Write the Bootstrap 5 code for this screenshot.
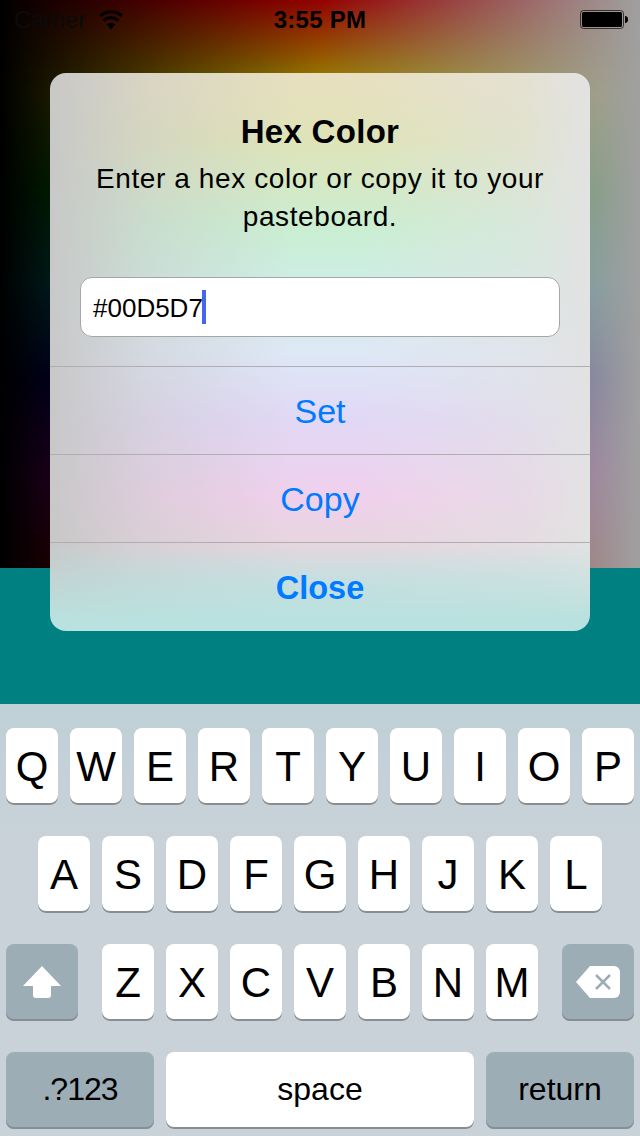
<!DOCTYPE html>
<html lang="en">
<head>
  <meta charset="UTF-8">
  <title>Hex Color</title>
  <meta name="viewport" content="width=device-width, initial-scale=1.0">
  <link rel="stylesheet" href="https://cdn.jsdelivr.net/npm/bootstrap@5.3.0/dist/css/bootstrap.min.css">
  <style>
    body { font-family: "Liberation Sans", Arial, sans-serif; width: 640px; height: 1136px; overflow: hidden; color: #000; background: #c9d2d8; }
    .stage { height: 704px; background: #008080; }
    .picker { height: 568px; background: linear-gradient(to right, #000 0, rgba(0,0,0,.9) 8%, rgba(0,0,0,.42) 50%, #a0a0a0 100%), linear-gradient(to bottom, #f00 0, #ff0 16.67%, #0f0 33.33%, #0ff 50%, #00f 66.67%, #f0f 83.33%, #f00 100%); }
    .status-bar { height: 40px; padding: 0 11px 0 14px; font-size: 24px; }
    .status-side { width: 200px; }
    .status-time { font-weight: 700; letter-spacing: .25px; margin-left: -3px; }
    .carrier { color: #0b0b0b; margin-right: 13px; letter-spacing: -.2px; }
    .alert-box { position: absolute; left: 50px; top: 73px; width: 540px; height: 558px; border-radius: 16px; overflow: hidden; text-align: center;
      background: linear-gradient(to bottom, rgba(185,225,223,0) 84%, #b9e1df 98%),
        linear-gradient(to right, #c8c8c8 0, rgba(200,200,200,.45) 18%, rgba(222,222,222,0) 45%, rgba(226,226,226,0) 58%, rgba(226,226,226,.55) 88%, #e2e2e2 100%),
        linear-gradient(to bottom, #e8dfc0 0, #dfe3b8 12%, #caeed2 28%, #cdeee2 36%, #dee8f6 50%, #e1d8f6 62%, #f0d0ec 76%, #e6d6de 85%, #cfdde0 92%); }
    .alert-title { font-size: 33px; font-weight: 700; line-height: 38px; padding-top: 40px; letter-spacing: .3px; }
    .alert-msg { font-size: 28px; line-height: 38px; padding: 9px 30px 0; margin: 0; letter-spacing: .6px; }
    .hex-field { width: 480px; height: 60px; margin: 41px 30px 29px; padding: 2px 12px 0; border: 1px solid #a6a6a6; border-radius: 12px; background: #fff; font-size: 26px; }
    .caret-bar { width: 4px; height: 34px; margin-top: -2px; margin-left: -1px; background: #4766f0; }
    .alert-btn { height: 88px; padding-top: 2px; font-size: 34px; color: #007aff; border-top: 1px solid #b0aeb2; }
    .alert-btn-bold { font-size: 32.5px; font-weight: 700; padding-top: 4px; }
    .kb { height: 432px; padding-top: 24px; background: linear-gradient(to bottom, #bfd0d7 0, #c9d2d8 35%, #c9d2d8 100%); }
    .kb-row { height: 77px; margin-bottom: 31px; gap: 12px; }
    .kb-key { width: 52px; height: 77px; flex: none; background: #fff; border-radius: 8px; box-shadow: inset 0 -2px 0 #878e93; font-size: 42px; }
    .kb-dark { background: #9dadb6; }
    .kb-wide { width: 72px; padding-bottom: 2px; }
    .kb-side { width: 148px; font-size: 32px; padding-bottom: 4px; }
    .kb-num { letter-spacing: -1px; }
    .kb-space { width: 308px; font-size: 32px; padding-bottom: 4px; }
    .kb-gap { width: 0; }
  </style>
</head>
<body class="position-relative">

<div class="stage">
  <div class="picker">
    <div class="status-bar d-flex align-items-center justify-content-between">
      <div class="status-side d-flex align-items-center">
        <span class="carrier">Carrier</span>
        <svg width="24" height="20" viewBox="0 0 24 20"><path d="M12 19.500 7.800 14.500a6 6 0 0 1 8.400 0Z" fill="#000"/><path d="M4.600 10.600a11 11 0 0 1 14.800 0M1.200 5.800a16.500 16.500 0 0 1 21.600 0" fill="none" stroke="#000" stroke-width="3.200"/></svg>
      </div>
      <span class="status-time">3:55 PM</span>
      <div class="status-side d-flex align-items-center justify-content-end">
        <svg width="49" height="20" viewBox="0 0 49 20"><rect x=".5" y=".5" width="43" height="18" rx="3" fill="none" stroke="#000" stroke-opacity=".65"/><rect x="2" y="2" width="40" height="15" rx="1.500" fill="#000"/><path d="M45 6c2 0 3 1.500 3 3.500s-1 3.500-3 3.500Z" fill="#000"/></svg>
      </div>
    </div>
  </div>
</div>

<div class="alert-box d-flex flex-column">
  <div class="alert-title">Hex Color</div>
  <p class="alert-msg">Enter a hex color or copy it to your pasteboard.</p>
  <div class="hex-field d-flex align-items-center">#00D5D7<span class="caret-bar"></span></div>
  <div class="alert-btn d-flex align-items-center justify-content-center">Set</div>
  <div class="alert-btn d-flex align-items-center justify-content-center">Copy</div>
  <div class="alert-btn alert-btn-bold d-flex align-items-center justify-content-center">Close</div>
</div>

<div class="kb">
  <div class="kb-row d-flex justify-content-center">
    <div class="kb-key d-flex align-items-center justify-content-center">Q</div>
    <div class="kb-key d-flex align-items-center justify-content-center">W</div>
    <div class="kb-key d-flex align-items-center justify-content-center">E</div>
    <div class="kb-key d-flex align-items-center justify-content-center">R</div>
    <div class="kb-key d-flex align-items-center justify-content-center">T</div>
    <div class="kb-key d-flex align-items-center justify-content-center">Y</div>
    <div class="kb-key d-flex align-items-center justify-content-center">U</div>
    <div class="kb-key d-flex align-items-center justify-content-center">I</div>
    <div class="kb-key d-flex align-items-center justify-content-center">O</div>
    <div class="kb-key d-flex align-items-center justify-content-center">P</div>
  </div>
  <div class="kb-row d-flex justify-content-center">
    <div class="kb-key d-flex align-items-center justify-content-center">A</div>
    <div class="kb-key d-flex align-items-center justify-content-center">S</div>
    <div class="kb-key d-flex align-items-center justify-content-center">D</div>
    <div class="kb-key d-flex align-items-center justify-content-center">F</div>
    <div class="kb-key d-flex align-items-center justify-content-center">G</div>
    <div class="kb-key d-flex align-items-center justify-content-center">H</div>
    <div class="kb-key d-flex align-items-center justify-content-center">J</div>
    <div class="kb-key d-flex align-items-center justify-content-center">K</div>
    <div class="kb-key d-flex align-items-center justify-content-center">L</div>
  </div>
  <div class="kb-row d-flex justify-content-center">
    <div class="kb-key kb-dark kb-wide d-flex align-items-center justify-content-center">
      <svg width="38" height="32" viewBox="0 0 38 32"><path d="M19 0 38 20H28V29a3 3 0 0 1-3 3H13a3 3 0 0 1-3-3V20H0Z" fill="#fff"/></svg>
    </div>
    <div class="kb-gap"></div>
    <div class="kb-key d-flex align-items-center justify-content-center">Z</div>
    <div class="kb-key d-flex align-items-center justify-content-center">X</div>
    <div class="kb-key d-flex align-items-center justify-content-center">C</div>
    <div class="kb-key d-flex align-items-center justify-content-center">V</div>
    <div class="kb-key d-flex align-items-center justify-content-center">B</div>
    <div class="kb-key d-flex align-items-center justify-content-center">N</div>
    <div class="kb-key d-flex align-items-center justify-content-center">M</div>
    <div class="kb-gap"></div>
    <div class="kb-key kb-dark kb-wide d-flex align-items-center justify-content-center">
      <svg width="44" height="32" viewBox="0 0 44 32"><path d="M14 0H38a6 6 0 0 1 6 6V26a6 6 0 0 1-6 6H14L0 16Z" fill="#fff"/><path d="M20 9 34 23M34 9 20 23" stroke="#9dadb6" stroke-width="2.500"/></svg>
    </div>
  </div>
  <div class="kb-row d-flex justify-content-center">
    <div class="kb-key kb-dark kb-side kb-num d-flex align-items-center justify-content-center">.?123</div>
    <div class="kb-key kb-space d-flex align-items-center justify-content-center">space</div>
    <div class="kb-key kb-dark kb-side d-flex align-items-center justify-content-center">return</div>
  </div>
</div>

<script src="https://cdn.jsdelivr.net/npm/bootstrap@5.3.0/dist/js/bootstrap.bundle.min.js"></script>
</body>
</html>
